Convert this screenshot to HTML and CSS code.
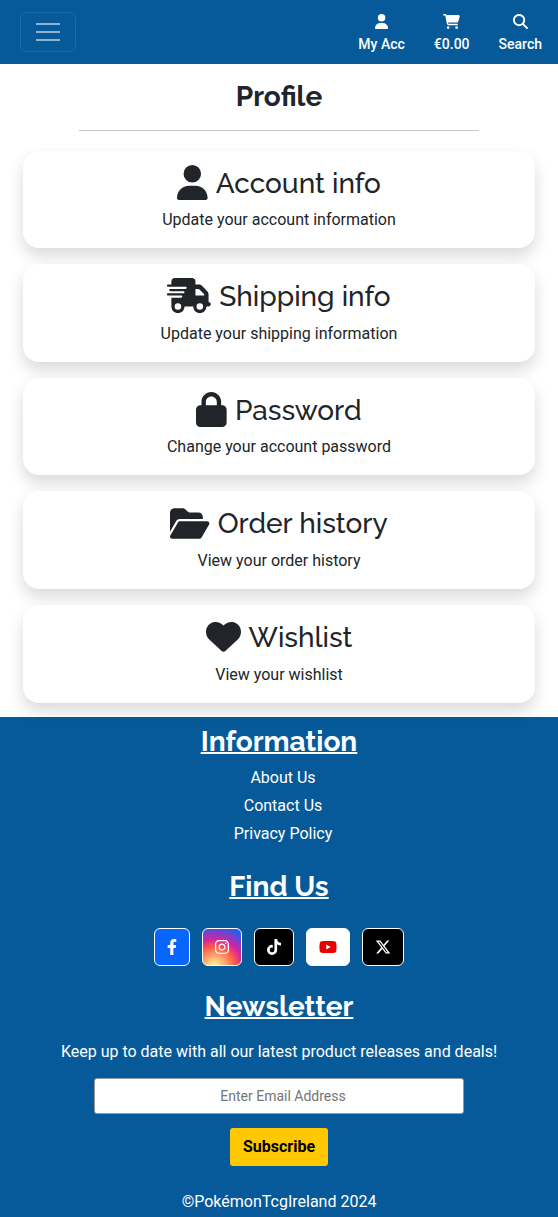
FILE: index.html
```html
<!DOCTYPE html>
<html lang="en">
<head>
<meta charset="utf-8">
<meta name="viewport" content="width=device-width, initial-scale=1">
<title>Profile</title>
<link rel="stylesheet" href="styles.css">
</head>
<body>
<header class="navbar">
  <button class="toggler" type="button" aria-label="Toggle navigation">
    <svg viewBox="0 0 30 30"><path stroke="currentColor" stroke-linecap="butt" stroke-width="2" d="M3 7h24M3 15h24M3 23h24"/></svg>
  </button>
  <nav class="nav-actions">
    <a href="#"><svg class="fa" viewBox="0 0 448 512"><path d="M224 256A128 128 0 1 0 224 0a128 128 0 1 0 0 256zm-45.7 48C79.8 304 0 383.8 0 482.3C0 498.7 13.3 512 29.7 512H418.3c16.4 0 29.7-13.3 29.7-29.7C448 383.8 368.2 304 269.7 304H178.3z"/></svg>My Acc</a>
    <a href="#"><svg class="fa" viewBox="0 0 576 512"><path d="M0 24C0 10.7 10.7 0 24 0H69.5c22 0 41.5 12.8 50.6 32h411c26.3 0 45.5 25 38.6 50.4l-41 152.3c-8.5 31.4-37 53.3-69.5 53.3H170.7l5.4 28.5c2.2 11.3 12.1 19.5 23.6 19.5H488c13.3 0 24 10.7 24 24s-10.7 24-24 24H199.7c-34.6 0-64.3-24.6-70.7-58.5L77.4 54.5c-.7-3.8-4-6.5-7.9-6.5H24C10.7 48 0 37.3 0 24zM128 464a48 48 0 1 1 96 0 48 48 0 1 1 -96 0zm336-48a48 48 0 1 1 0 96 48 48 0 1 1 0-96z"/></svg>€0.00</a>
    <a href="#"><svg class="fa" viewBox="0 0 512 512"><path d="M416 208c0 45.9-14.9 88.3-40 122.7L502.6 457.4c12.5 12.5 12.5 32.8 0 45.3s-32.8 12.5-45.3 0L330.7 376c-34.4 25.2-76.8 40-122.7 40C93.1 416 0 322.9 0 208S93.1 0 208 0S416 93.1 416 208zM208 352a144 144 0 1 0 0-288 144 144 0 1 0 0 288z"/></svg>Search</a>
  </nav>
</header>

<main class="profile">
  <h1 class="page-title">Profile</h1>
  <hr class="rule">
  <div class="cards">
    <a class="card" href="#">
      <h2><svg class="fa" viewBox="0 0 448 512"><path d="M224 256A128 128 0 1 0 224 0a128 128 0 1 0 0 256zm-45.7 48C79.8 304 0 383.8 0 482.3C0 498.7 13.3 512 29.7 512H418.3c16.4 0 29.7-13.3 29.7-29.7C448 383.8 368.2 304 269.7 304H178.3z"/></svg>Account info</h2>
      <p>Update your account information</p>
    </a>
    <a class="card" href="#">
      <h2><svg class="fa" viewBox="0 0 640 512"><path d="M112 0C85.5 0 64 21.5 64 48V96H16c-8.8 0-16 7.2-16 16s7.2 16 16 16H64 272c8.8 0 16 7.2 16 16s-7.2 16-16 16H64 48c-8.8 0-16 7.2-16 16s7.2 16 16 16H64 240c8.8 0 16 7.2 16 16s-7.2 16-16 16H64 16c-8.8 0-16 7.2-16 16s7.2 16 16 16H64 208c8.8 0 16 7.2 16 16s-7.2 16-16 16H64V416c0 53 43 96 96 96s96-43 96-96H384c0 53 43 96 96 96s96-43 96-96h32c17.7 0 32-14.3 32-32s-14.3-32-32-32V288 256 237.3c0-17-6.7-33.3-18.7-45.3L512 114.7c-12-12-28.3-18.7-45.3-18.7H416V48c0-26.5-21.5-48-48-48H112zM544 237.3V256H416V160h50.7L544 237.3zM160 368a48 48 0 1 1 0 96 48 48 0 1 1 0-96zm272 48a48 48 0 1 1 96 0 48 48 0 1 1 -96 0z"/></svg>Shipping info</h2>
      <p>Update your shipping information</p>
    </a>
    <a class="card" href="#">
      <h2><svg class="fa" viewBox="0 0 448 512"><path d="M144 144v48H304V144c0-44.2-35.8-80-80-80s-80 35.8-80 80zM80 192V144C80 64.5 144.5 0 224 0s144 64.5 144 144v48h16c35.3 0 64 28.7 64 64V448c0 35.3-28.7 64-64 64H64c-35.3 0-64-28.7-64-64V256c0-35.3 28.7-64 64-64H80z"/></svg>Password</h2>
      <p>Change your account password</p>
    </a>
    <a class="card" href="#">
      <h2><svg class="fa" viewBox="0 0 576 512"><path d="M88.7 223.8L0 375.8V96C0 60.7 28.7 32 64 32H181.5c17 0 33.3 6.7 45.3 18.7l26.5 26.5c12 12 28.3 18.7 45.3 18.7H416c35.3 0 64 28.7 64 64v32H144c-22.8 0-43.8 12.1-55.3 31.8zm27.6 16.1C122.1 230 132.6 224 144 224H544c11.5 0 22 6.1 27.7 16.1s5.7 22.2-.1 32.1l-112 192C453.9 474 443.4 480 432 480H32c-11.5 0-22-6.1-27.7-16.1s-5.7-22.2 .1-32.1l112-192z"/></svg>Order history</h2>
      <p>View your order history</p>
    </a>
    <a class="card" href="#">
      <h2><svg class="fa" viewBox="0 0 512 512"><path d="M47.6 300.4L228.3 469.1c7.5 7 17.4 10.9 27.7 10.9s20.2-3.9 27.7-10.9L464.4 300.4c30.4-28.3 47.6-68 47.6-109.5v-5.8c0-69.9-50.5-129.5-119.4-141C347 36.5 300.6 51.4 268 84L256 96 244 84c-32.6-32.6-79-47.5-124.6-39.9C50.5 55.6 0 115.2 0 185.1v5.8c0 41.5 17.2 81.2 47.6 109.5z"/></svg>Wishlist</h2>
      <p>View your wishlist</p>
    </a>
  </div>
</main>

<footer class="footer">
  <h2>Information</h2>
  <ul class="links">
    <li><a href="#">About Us</a></li>
    <li><a href="#">Contact Us</a></li>
    <li><a href="#">Privacy Policy</a></li>
  </ul>
  <h2>Find Us</h2>
  <div class="social">
    <a class="facebook" href="#" aria-label="Facebook"><svg class="fa" viewBox="0 0 320 512"><path d="M279.14 288l14.22-92.66h-88.91v-60.13c0-25.35 12.42-50.06 52.24-50.06h40.42V6.26S260.43 0 225.36 0c-73.22 0-121.08 44.38-121.08 124.72v70.62H22.89V288h81.39v224h100.17V288z"/></svg></a>
    <a class="instagram" href="#" aria-label="Instagram"><svg class="fa" viewBox="0 0 448 512"><path d="M224.1 141c-63.6 0-114.9 51.3-114.9 114.9s51.3 114.9 114.9 114.9S339 319.5 339 255.9 287.7 141 224.1 141zm0 189.6c-41.1 0-74.7-33.5-74.7-74.7s33.5-74.7 74.7-74.7 74.7 33.5 74.7 74.7-33.6 74.7-74.7 74.7zm146.4-194.3c0 14.9-12 26.8-26.8 26.8-14.9 0-26.8-12-26.8-26.8s12-26.8 26.8-26.8 26.8 12 26.8 26.8zm76.1 27.2c-1.7-35.9-9.9-67.7-36.2-93.9-26.2-26.2-58-34.4-93.9-36.2-37-2.1-147.9-2.1-184.9 0-35.8 1.7-67.6 9.9-93.9 36.1s-34.4 58-36.2 93.9c-2.1 37-2.1 147.9 0 184.9 1.7 35.9 9.9 67.7 36.2 93.9s58 34.4 93.9 36.2c37 2.1 147.9 2.1 184.9 0 35.9-1.7 67.7-9.9 93.9-36.2 26.2-26.2 34.4-58 36.2-93.9 2.1-37 2.1-147.8 0-184.8zM398.8 388c-7.8 19.6-22.9 34.7-42.6 42.6-29.5 11.7-99.5 9-132.1 9s-102.7 2.6-132.1-9c-19.6-7.8-34.7-22.9-42.6-42.6-11.7-29.5-9-99.5-9-132.1s-2.6-102.7 9-132.1c7.8-19.6 22.9-34.7 42.6-42.6 29.5-11.7 99.5-9 132.1-9s102.7-2.6 132.1 9c19.6 7.8 34.7 22.9 42.6 42.6 11.7 29.5 9 99.5 9 132.1s2.7 102.7-9 132.1z"/></svg></a>
    <a class="dark" href="#" aria-label="TikTok"><svg class="fa" viewBox="0 0 448 512"><path d="M448,209.91a210.06,210.06,0,0,1-122.77-39.25V349.38A162.55,162.55,0,1,1,185,188.31V278.2a74.62,74.62,0,1,0,52.23,71.18V0l88,0a121.18,121.18,0,0,0,1.86,22.17h0A122.18,122.18,0,0,0,381,102.39a121.43,121.43,0,0,0,67,20.14Z"/></svg></a>
    <a class="youtube" href="#" aria-label="YouTube"><svg class="fa" viewBox="0 0 576 512"><path d="M549.655 124.083c-6.281-23.65-24.787-42.276-48.284-48.597C458.781 64 288 64 288 64S117.22 64 74.629 75.486c-23.497 6.322-42.003 24.947-48.284 48.597-11.412 42.867-11.412 132.305-11.412 132.305s0 89.438 11.412 132.305c6.281 23.65 24.787 41.5 48.284 47.821C117.22 448 288 448 288 448s170.78 0 213.371-11.486c23.497-6.321 42.003-24.171 48.284-47.821 11.412-42.867 11.412-132.305 11.412-132.305s0-89.438-11.412-132.305zm-317.51 213.508V175.185l142.739 81.205-142.739 81.201z"/></svg></a>
    <a class="dark" href="#" aria-label="X"><svg class="fa" viewBox="0 0 512 512"><path d="M389.2 48h70.6L305.6 224.2 487 464H345L233.7 318.6 106.5 464H35.8L200.7 275.5 26.8 48H172.4L272.9 180.9 389.2 48zM364.4 421.8h39.1L151.1 88h-42L364.4 421.8z"/></svg></a>
  </div>
  <h2>Newsletter</h2>
  <form class="newsletter">
    <label for="email">Keep up to date with all our latest product releases and deals!</label>
    <input id="email" type="email" placeholder="Enter Email Address">
    <button type="submit">Subscribe</button>
  </form>
  <p class="copyright">©PokémonTcgIreland 2024</p>
</footer>
</body>
</html>
```
FILE: styles.css
```css
*, *::before, *::after {
  box-sizing: border-box;
}

body {
  margin: 0;
  font-family: Roboto, "Liberation Sans", sans-serif;
  font-size: 16px;
  line-height: 1.5;
  color: #212529;
  background: #fff;
}

h1, h2, p, ul {
  margin: 0;
}

h1, h2 {
  font-family: Raleway, Lato, sans-serif;
  font-size: 28px;
  line-height: 1.2;
}

a {
  color: inherit;
  text-decoration: none;
}

.fa {
  height: 1em;
  fill: currentColor;
  flex: none;
}

.navbar {
  display: flex;
  align-items: center;
  justify-content: space-between;
  height: 64px;
  padding: 0 16px 0 20px;
  color: #fff;
  background: #075a99;
}

.toggler {
  display: flex;
  align-items: center;
  justify-content: center;
  width: 56px;
  height: 40px;
  padding: 0;
  color: rgba(255, 255, 255, 0.55);
  background: none;
  border: 1px solid rgba(255, 255, 255, 0.1);
  border-radius: 6px;
}

.toggler svg {
  width: 30px;
  height: 30px;
}

.nav-actions {
  display: flex;
  gap: 29px;
  padding-top: 4px;
  font-size: 14px;
  font-weight: 500;
}

.nav-actions a {
  display: flex;
  flex-direction: column;
  align-items: center;
  gap: 5px;
}

.nav-actions .fa {
  height: 15px;
}

.profile {
  padding: 16px 23px 14px;
}

.page-title {
  text-align: center;
}

.rule {
  width: 400px;
  max-width: 100%;
  height: 1px;
  margin: 16px auto 20px;
  border: 0;
  background: #c7c8c9;
}

.cards {
  display: flex;
  flex-direction: column;
  gap: 16px;
}

.card {
  padding: 16px;
  text-align: center;
  background: #fff;
  border-radius: 16px;
  box-shadow: 0 8px 16px rgba(0, 0, 0, 0.15);
}

.card h2 {
  display: flex;
  align-items: center;
  justify-content: center;
  gap: 8px;
  margin-bottom: 8px;
  font-weight: 500;
}

.card .fa {
  height: 35px;
  margin: -3px 0 -1px;
}

.footer {
  display: flex;
  flex-direction: column;
  align-items: center;
  padding: 8px 16px 4px;
  color: #fff;
  text-align: center;
  background: #075a99;
}

.footer h2 {
  text-decoration: underline;
  text-decoration-thickness: 2px;
}

.links {
  display: flex;
  flex-direction: column;
  gap: 4px;
  margin: 8px 0 24px;
  padding: 0 0 0 8px;
  list-style: none;
}

.social {
  display: flex;
  gap: 12px;
  margin: 24px 0;
}

.social a {
  display: flex;
  align-items: center;
  height: 38px;
  padding: 0 12px;
  border: 1px solid #fff;
  border-radius: 6px;
}

.facebook {
  background: #0866ff;
}

.instagram {
  background:
    radial-gradient(circle at 30% 107%, #fdf497 0%, #fdf497 5%, #fd5949 45%, #d6249f 60%, #285aeb 90%);
}

.dark {
  background: #000;
}

.youtube {
  color: #e60000;
  background: #fff;
}

.newsletter {
  display: flex;
  flex-direction: column;
  align-items: center;
  gap: 14px;
  width: 100%;
  margin: 17px 0 24px;
}

.newsletter input {
  width: 370px;
  max-width: 100%;
  height: 36px;
  padding: 0 4px 0 12px;
  font: inherit;
  font-size: 14px;
  text-align: center;
  border: 1px solid #999;
  border-radius: 3px;
}

.newsletter input::placeholder {
  color: #757575;
}

.newsletter button {
  height: 38px;
  padding: 0 13px;
  font: inherit;
  font-weight: 700;
  color: #000;
  background: #ffc800;
  border: 0;
  border-radius: 3px;
}
```
